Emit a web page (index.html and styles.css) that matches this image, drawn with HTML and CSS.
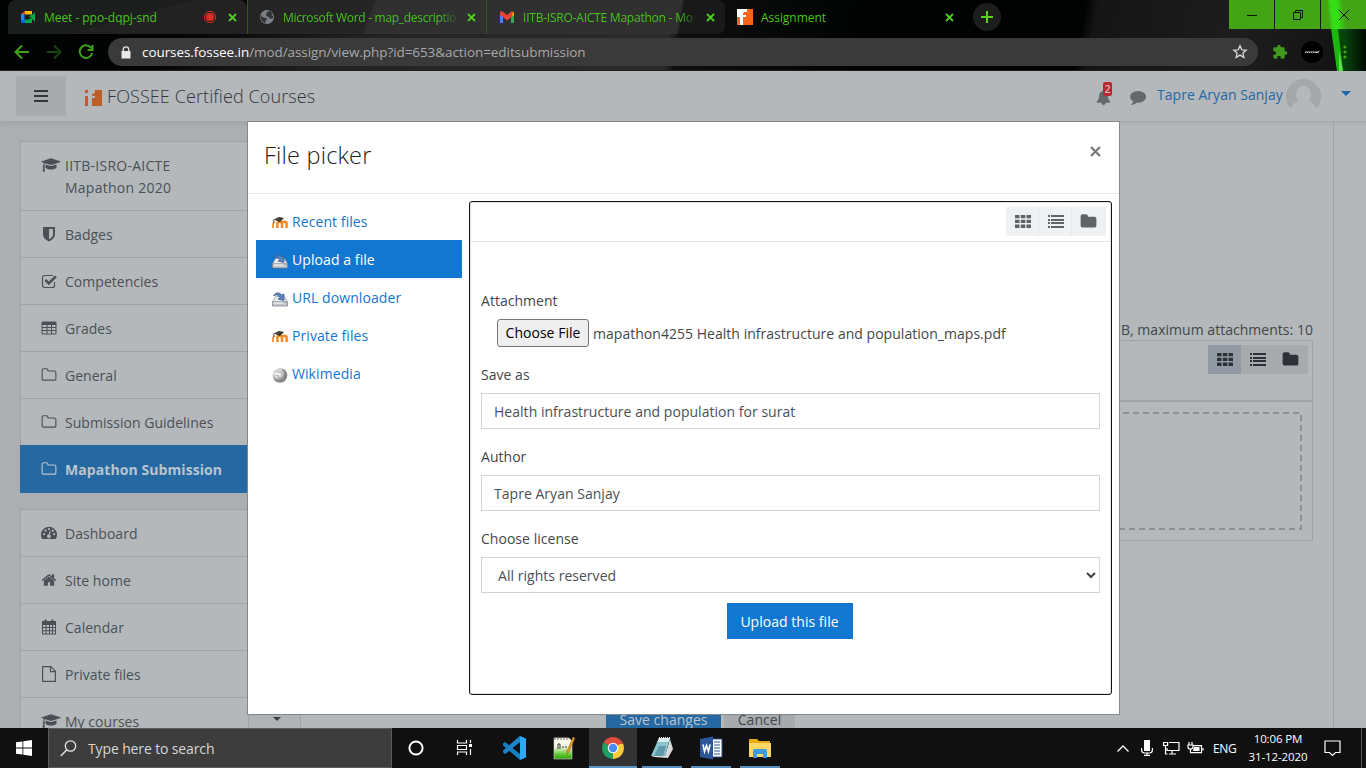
FILE: index.html
```html
<!DOCTYPE html>
<html lang="en">
<head>
<meta charset="utf-8">
<title>Assignment</title>
<link rel="stylesheet" href="styles.css">
</head>
<body>
<svg class="defs" width="0" height="0">
  <symbol id="cap" viewBox="0 0 2304 1792"><path d="M1774 836l18 316q4 69-82 128t-235 93.500-323 34.500-323-34.500-235-93.500-82-128l18-316 574 181q22 7 48 7t48-7zm530-324q0 23-22 31l-1120 352q-4 1-10 1t-10-1l-652-206q-43 34-71 111.500t-34 178.500q63 36 63 109 0 69-58 107l58 433q2 14-8 25-9 11-24 11h-192q-15 0-24-11-10-11-8-25l58-433q-58-38-58-107 0-73 65-111 11-207 98-330l-333-104q-22-8-22-31t22-31l1120-352q4-1 10-1t10 1l1120 352q22 8 22 31z"/></symbol>
  <symbol id="folder-o" viewBox="0 0 1792 1792"><path d="M1600 1312v-704q0-40-28-68t-68-28h-704q-40 0-68-28t-28-68v-64q0-40-28-68t-68-28h-320q-40 0-68 28t-28 68v960q0 40 28 68t68 28h1216q40 0 68-28t28-68zm128-704v704q0 92-66 158t-158 66h-1216q-92 0-158-66t-66-158v-960q0-92 66-158t158-66h320q92 0 158 66t66 158v32h672q92 0 158 66t66 158z"/></symbol>
  <symbol id="folder" viewBox="0 0 1792 1792"><path d="M1728 608v704q0 92-66 158t-158 66h-1216q-92 0-158-66t-66-158v-960q0-92 66-158t158-66h320q92 0 158 66t66 158v32h672q92 0 158 66t66 158z"/></symbol>
  <symbol id="home" viewBox="0 0 1792 1792"><path d="M1472 992v480q0 26-19 45t-45 19h-384v-384h-256v384h-384q-26 0-45-19t-19-45v-480q0-1 .5-3t.5-3l575-474 575 474q1 2 1 6zm223-69l-62 74q-8 9-21 11h-3q-13 0-21-7l-692-577-692 577q-12 8-24 7-13-2-21-11l-62-74q-8-10-7-23.500t11-21.500l719-599q32-26 76-26t76 26l244 204v-195q0-14 9-23t23-9h192q14 0 23 9t9 23v408l219 182q10 8 11 21.500t-7 23.500z"/></symbol>
  <symbol id="bell" viewBox="0 0 1792 1792"><path d="M1728 1408q0 52-38 90t-90 38h-448q0 106-75 181t-181 75-181-75-75-181h-448q-52 0-90-38t-38-90q50-42 91-88t85-119.500 74.500-158.500 50-206 19.500-260q0-152 117-282.500t307-158.500q-8-19-8-39 0-40 28-68t68-28 68 28 28 68q0 20-8 39 190 28 307 158.500t117 282.500q0 139 19.500 260t50 206 74.500 158.500 85 119.500 91 88z"/></symbol>
  <symbol id="comment" viewBox="0 0 1792 1792"><path d="M1792 896q0 174-120 321.500t-326 233-450 85.500q-70 0-145-8-198 175-460 242-49 14-114 22-17 2-30.500-9t-17.500-29q-3-14 6-25 60-65 97-107 60-66 117-261-157-89-247.500-220t-90.500-281q0-130 71-248.500t191-204.500 286-136.500 348-50.500q244 0 450 85.500t326 233 120 321.500z"/></symbol>
  <symbol id="shield" viewBox="0 0 16 16"><path fill-rule="evenodd" d="M2 1h12v7c0 3.500-2.500 5.800-6 7.500C4.500 13.800 2 11.500 2 8zM8 3v10.300c2.500-1.400 4-3 4-5.300V3z"/></symbol>
  <symbol id="check" viewBox="0 0 16 16"><path d="M13.500 9v3.500a2 2 0 0 1-2 2h-8a2 2 0 0 1-2-2v-8a2 2 0 0 1 2-2H12" fill="none" stroke="currentColor" stroke-width="1.200"/><path d="M3.500 7.800l1.700-1.700 2.600 2.500L14 2.500l1.800 1.800-8 8z"/></symbol>
  <symbol id="table" viewBox="0 0 16 16"><path fill-rule="evenodd" d="M1.500 1.500h13q1 0 1 1v11q0 1-1 1h-13q-1 0-1-1v-11q0-1 1-1zM1.500 5v2h4V5zm5 0v2h3.500V5zm4.500 0v2h3.500V5zM1.500 8v2h4V8zm5 0v2h3.500V8zM11 8v2h3.500V8zM1.500 11v2.500h4V11zm5 0v2.500h3.500V11zm4.500 0v2.500h3.500V11z"/></symbol>
  <symbol id="dash" viewBox="0 0 16 16"><path fill-rule="evenodd" d="M1.200 14A8 8 0 1 1 14.800 14zM2 9.200a1.100 1.100 0 1 0 2.200 0a1.100 1.100 0 1 0-2.200 0zM3.500 5.700a1.100 1.100 0 1 0 2.200 0a1.100 1.100 0 1 0-2.200 0zM6.900 4a1.100 1.100 0 1 0 2.200 0a1.100 1.100 0 1 0-2.200 0zM10.700 5.700a1.100 1.100 0 1 0 2.200 0a1.100 1.100 0 1 0-2.200 0zM12 9.200a1.100 1.100 0 1 0 2.200 0a1.100 1.100 0 1 0-2.200 0zM8.600 6l-.9 3.500a1.800 1.800 0 1 0 1.200.3L9.700 6.200z"/></symbol>
  <symbol id="cal" viewBox="0 0 16 16"><path fill-rule="evenodd" d="M1 2h2.500V.5h2V2h5V.5h2V2H15v13.500H1zM2 6v2h2.500V6zm3.500 0v2H8V6zM9 6v2h2V6zm3 0v2h2V6zM2 9v2.300h2.500V9zm3.500 0v2.300H8V9zM9 9v2.300h2V9zm3 0v2.300h2V9zM2 12.300v2.200h2.500v-2.200zm3.500 0v2.200H8v-2.200zm3.500 0v2.200h2v-2.200zm3 0v2.200h2v-2.200z"/></symbol>
  <symbol id="file" viewBox="0 0 16 16"><path d="M1.600.6h8.200l4.600 4.600v10.200H1.600zM9.500.6v5h5" fill="none" stroke="currentColor" stroke-width="1.200"/></symbol>
  <symbol id="th" viewBox="0 0 16 13"><path d="M0 0h4.500v3.300H0zM5.800 0h4.500v3.300H5.800zM11.500 0H16v3.300h-4.500zM0 4.800h4.500v3.300H0zM5.800 4.800h4.500v3.300H5.800zM11.500 4.800H16v3.300h-4.500zM0 9.600h4.500v3.300H0zM5.800 9.600h4.500v3.300H5.800zM11.500 9.600H16v3.300h-4.500z"/></symbol>
  <symbol id="list" viewBox="0 0 16 13"><path shape-rendering="crispEdges" d="M0 0h2v2H0zM3 0h13v2H3zM0 4h2v2H0zM3 4h13v2H3zM0 7h2v2H0zM3 7h13v2H3zM0 11h2v2H0zM3 11h13v2H3z"/></symbol>
  <symbol id="moodle" viewBox="0 0 16 16"><path d="M1 13V9.500Q1 7.500 3 6.500" fill="none" stroke="#f29233" stroke-width="1.800"/><path d="M5.400 13V8.700q0-2 2.300-2t2.300 2V13M10 8.700q0-2 2.300-2t2.300 2V13" fill="none" stroke="#f68a22" stroke-width="2.500"/><path d="M1.500 4.500L7 2l5 1-4 4z" fill="#38342f"/><path d="M7.500 4L1.500 5v3.500" stroke="#6a625a" stroke-width=".8" fill="none"/></symbol>
  <symbol id="drive" viewBox="0 0 16 16"><path d="M3.500 5.500h9L15.500 11H.5z" fill="#e8eaee" stroke="#8f959d" stroke-width=".7"/><path d="M.5 11h15v4H.5z" fill="#c6c9ce" stroke="#777c83" stroke-width=".7"/><path d="M1.500 12h10" stroke="#fff"/><path d="M1.500 4.500Q5-.5 10 4l2-1v6.500L6 8l2-1.500Q6 3 1.500 4.500z" fill="#5b84bd" stroke="#345a92" stroke-width=".7"/></symbol>
  <symbol id="puzzle" viewBox="0 0 24 24"><path d="M20.500 11H19V7a2 2 0 0 0-2-2h-4V3.500a2.500 2.500 0 0 0-5 0V5H4a2 2 0 0 0-2 2v3.800h1.500a2.700 2.700 0 0 1 0 5.400H2V20a2 2 0 0 0 2 2h3.800v-1.500a2.700 2.700 0 0 1 5.400 0V22H17a2 2 0 0 0 2-2v-4h1.500a2.500 2.500 0 0 0 0-5z"/></symbol>
</svg>

<div class="screen">
  <div class="browser">
    <svg class="streak" width="60" height="71" viewBox="0 0 60 71"><defs><linearGradient id="g"><stop offset="0" stop-color="#0b3d0b" stop-opacity="0"/><stop offset=".3" stop-color="#084d08"/><stop offset=".5" stop-color="#05400c"/><stop offset="1" stop-color="#020a02"/></linearGradient></defs><path d="M20 0h40v71H32z" fill="url(#g)"/><path d="M21 0h7q5 35 9 71h-6Q26 35 21 0z" fill="#1cb80f"/><path d="M33 50l4 21h-4z" fill="#5ce04e"/></svg>
    <div class="tabs">
      <div class="tab t1">
        <svg width="16" height="16" viewBox="0 0 16 16"><path d="M1 5l4-3v3z" fill="#ea4335"/><path d="M5 2h7v3.500H5z" fill="#fbbc04"/><path d="M1 5h3.500v6H1z" fill="#2684fc"/><path d="M1 11h4v3H2q-1 0-1-1z" fill="#0066da"/><path d="M5 10.500h4L12 8v6H5z" fill="#00ac47"/><path d="M9 8l3-3.500V8zM12 6l3-2.500v9L12 10z" fill="#00ac47"/></svg>
        <span class="tt tt1">Meet - ppo-dqpj-snd</span>
        <svg class="rec" width="14" height="14" viewBox="0 0 14 14"><circle cx="7" cy="7" r="5.600" fill="none" stroke="#d93025" stroke-width="1"/><circle cx="7" cy="7" r="4" fill="#d93025"/></svg>
        <svg class="x" width="9" height="9" viewBox="0 0 9 9"><path d="M1 1l7 7M8 1L1 8"/></svg>
      </div>
      <div class="tab t2">
        <svg width="16" height="16" viewBox="0 0 16 16"><circle cx="8" cy="8" r="7" fill="#7b8086"/><path d="M2 6q1 3 5 3l1 1.500-1.500 1L7 14q-5-1-5.500-6zM8 3l3-1 3 3-2 1 2 1v2l-3 1-1-2-3-1z" fill="#303235"/></svg>
        <span class="tt tt2">Microsoft Word - map_descriptio</span>
        <svg class="x" width="9" height="9" viewBox="0 0 9 9"><path d="M1 1l7 7M8 1L1 8"/></svg>
      </div>
      <div class="tab t3">
        <svg width="16" height="16" viewBox="0 0 16 16"><path d="M1 5v9h3V7z" fill="#4285f4"/><path d="M12 7v7h2q1 0 1-1V5z" fill="#34a853"/><path d="M12 4l3-1v3l-3 2z" fill="#fbbc04"/><path d="M1 3l2-1 5 4 5-4 1 1-1 5-5 3.500L2.500 7 1 6z" fill="#ea4335"/></svg>
        <span class="tt tt3">IITB-ISRO-AICTE Mapathon - Mo</span>
        <svg class="x" width="9" height="9" viewBox="0 0 9 9"><path d="M1 1l7 7M8 1L1 8"/></svg>
      </div>
      <div class="tab t4">
        <svg width="16" height="16" viewBox="0 0 16 16"><path d="M0 0h16v16H0z" fill="#f8641b"/><path d="M0 0h10v3Q6 2 6 6h3v2H6v8H3V8H0z" fill="#fff"/></svg>
        <span class="tt tt4">Assignment</span>
        <svg class="x" width="9" height="9" viewBox="0 0 9 9"><path d="M1 1l7 7M8 1L1 8"/></svg>
      </div>
      <div class="newtab"><svg width="12" height="12" viewBox="0 0 12 12"><path d="M6 0v12M0 6h12"/></svg></div>
      <div class="win">
        <div><svg width="12" height="12" viewBox="0 0 12 12"><path d="M1 6.500h10"/></svg></div>
        <div><svg width="12" height="12" viewBox="0 0 12 12"><path d="M1.500 3.500h7v7h-7zM3.500 3.500v-2h7v7h-2"/></svg></div>
        <div class="wx"><svg width="12" height="12" viewBox="0 0 12 12"><path d="M1 1l10 10M11 1L1 11"/></svg></div>
      </div>
    </div>
    <div class="bar">
      <svg class="nav" width="16" height="16" viewBox="0 0 16 16"><path d="M15 8H2M8 1.500L1.500 8 8 14.500"/></svg>
      <svg class="nav dim" width="16" height="16" viewBox="0 0 16 16"><path d="M1 8h13M8 1.500L14.500 8 8 14.500"/></svg>
      <svg class="nav" width="16" height="16" viewBox="0 0 16 16"><path d="M13.500 4.500A6.300 6.300 0 1 0 14.200 9M14.500 1v5h-5"/></svg>
      <div class="url">
        <svg width="10" height="13" viewBox="0 0 10 13"><path d="M.5 5h9v7.500h-9z" fill="#e8e8e8"/><path d="M2.300 5V3.500a2.700 2.700 0 0 1 5.400 0V5" fill="none" stroke="#e8e8e8" stroke-width="1.300"/></svg>
        <span class="addr"><b>courses.fossee.in</b>/mod/assign/view.php?id=653&amp;action=editsubmission</span>
        <svg class="star" width="16" height="16" viewBox="0 0 16 16"><path d="M8 1.800l1.800 4 4.400.4-3.300 2.900 1 4.300L8 11.100l-3.900 2.300 1-4.300L1.800 6.200l4.400-.4z" fill="none" stroke="#d8d8d8" stroke-width="1.300"/></svg>
      </div>
      <svg class="puz" width="16" height="16"><use href="#puzzle"/></svg>
      <svg class="ava" width="22" height="22" viewBox="0 0 22 22"><circle cx="11" cy="11" r="11" fill="#000"/><path d="M4 10.500h12l3-1-2 2.500H4z" fill="#bdbdbd"/><path d="M5 11.500h10" stroke="#555" stroke-dasharray="1 1"/></svg>
      <svg class="dots" width="4" height="14" viewBox="0 0 4 14"><circle cx="2" cy="2" r="1.600"/><circle cx="2" cy="7" r="1.600"/><circle cx="2" cy="12" r="1.600"/></svg>
    </div>
  </div>

  <div class="page">
    <header class="head">
      <div class="burger"><i></i><i></i><i></i></div>
      <svg class="logo" width="17" height="17" viewBox="0 0 17 17"><path d="M0 0h17v17H0z" fill="#b4b8bb"/><path d="M0 1h3v3H0zM0 7h3v10H0zM9 1h8v16H7V9h3V7H7q0-3 3-3V2z" fill="#bd5e2a"/></svg>
      <span class="brand">FOSSEE Certified Courses</span>
      <div class="bell"><svg width="15" height="15"><use href="#bell"/></svg><em>2</em></div>
      <svg class="comm" width="16" height="16"><use href="#comment"/></svg>
      <span class="user">Tapre Aryan Sanjay</span>
      <svg class="pic" width="35" height="35" viewBox="0 0 35 35"><circle cx="17.500" cy="17.500" r="17.500" fill="#a4a8aa"/><path d="M17.500 7a7.500 8.500 0 0 1 4.800 15q6 2 9 9l-4 4H7.700l-4-4q3-7 9-9a7.500 8.500 0 0 1 4.800-15z" fill="#b4b8bb"/></svg>
      <i class="caret"></i>
    </header>
    <div class="content">
      <aside class="side">
        <nav class="menu">
          <a class="two"><svg class="capi" width="20" height="16"><use href="#cap"/></svg><span>IITB-ISRO-AICTE<br>Mapathon 2020</span></a>
          <a><svg width="16" height="16"><use href="#shield"/></svg><span>Badges</span></a>
          <a><svg width="16" height="16"><use href="#check"/></svg><span>Competencies</span></a>
          <a><svg width="16" height="16"><use href="#table"/></svg><span>Grades</span></a>
          <a><svg width="16" height="16"><use href="#folder-o"/></svg><span>General</span></a>
          <a><svg width="16" height="16"><use href="#folder-o"/></svg><span>Submission Guidelines</span></a>
          <a class="on"><svg width="16" height="16"><use href="#folder-o"/></svg><span>Mapathon Submission</span></a>
        </nav>
        <nav class="menu">
          <a><svg width="16" height="16"><use href="#dash"/></svg><span>Dashboard</span></a>
          <a><svg width="16" height="16"><use href="#home"/></svg><span>Site home</span></a>
          <a><svg width="16" height="16"><use href="#cal"/></svg><span>Calendar</span></a>
          <a><svg width="16" height="16"><use href="#file"/></svg><span>Private files</span></a>
          <a><svg class="capi" width="20" height="16"><use href="#cap"/></svg><span>My courses</span></a>
        </nav>
      </aside>
      <div class="scroll"><i class="caret dark"></i></div>
      <main class="main">
        <div class="max">Maximum file size: 10MB, maximum attachments: 10</div>
        <div class="fm">
          <div class="fmbar"><div class="btns dimmed"><span class="sel"><svg width="16" height="13"><use href="#th"/></svg></span><span><svg width="16" height="13"><use href="#list"/></svg></span><span><svg width="17" height="17"><use href="#folder"/></svg></span></div></div>
          <div class="drop"><svg width="970" height="118"><rect x="1" y="1" width="968" height="116" fill="none" stroke="#8d9194" stroke-width="2" stroke-dasharray="6 4"/></svg></div>
        </div>
        <div class="actions"><span class="save">Save changes</span><span class="cancel">Cancel</span></div>
      </main>
    </div>

    <div class="modal">
      <div class="mhead"><h3>File picker</h3><svg width="11" height="11" viewBox="0 0 11 11"><path d="M1 1l9 9M10 1l-9 9" stroke="#7c7c7c" stroke-width="2.400"/></svg></div>
      <div class="mbody">
        <div class="repos">
          <a><svg width="16" height="16"><use href="#moodle"/></svg><span>Recent files</span></a>
          <a class="on"><svg width="16" height="16"><use href="#drive"/></svg><span>Upload a file</span></a>
          <a><svg width="16" height="16"><use href="#drive"/></svg><span>URL downloader</span></a>
          <a><svg width="16" height="16"><use href="#moodle"/></svg><span>Private files</span></a>
          <a><svg width="16" height="16" viewBox="0 0 16 16"><defs><radialGradient id="w" cx=".35" cy=".35"><stop offset="0" stop-color="#fff"/><stop offset=".6" stop-color="#d8d8d8"/><stop offset="1" stop-color="#858585"/></radialGradient></defs><circle cx="8" cy="8.500" r="7.300" fill="url(#w)"/><path d="M2 5l3-1 1 2 3-1 1 3 4-1M3 9l3-1 1 3 4-1 1 3M6 1l1 4M10 5l2-3M5 12l2-1 1 4" fill="none" stroke="#999" stroke-width=".6"/><path d="M4 0h3L6 2.500 4 2z" fill="#fff"/></svg><span>Wikimedia</span></a>
        </div>
        <div class="panel">
          <div class="pbar"><div class="btns"><span><svg width="16" height="13"><use href="#th"/></svg></span><span><svg width="16" height="13"><use href="#list"/></svg></span><span><svg width="17" height="17"><use href="#folder"/></svg></span></div></div>
          <div class="form">
            <label class="la">Attachment</label>
            <div class="file"><span class="choose">Choose File</span><span class="fname">mapathon4255 Health infrastructure and population_maps.pdf</span></div>
            <label class="ls">Save as</label>
            <div class="input"><span class="v1">Health infrastructure and population for surat</span></div>
            <label class="lu">Author</label>
            <div class="input"><span class="v2">Tapre Aryan Sanjay</span></div>
            <label class="ll">Choose license</label>
            <div class="input select"><span class="v3">All rights reserved</span><svg width="10" height="7" viewBox="0 0 10 7"><path d="M1 1l4 4 4-4" fill="none" stroke="#3c4248" stroke-width="2"/></svg></div>
            <div class="upload"><span>Upload this file</span></div>
          </div>
        </div>
      </div>
    </div>
  </div>

  <div class="taskbar">
    <div class="start"><svg width="16" height="16" viewBox="0 0 16 16"><path d="M0 2.300l6.500-.9v6.200H0zM7.300 1.300L16 0v7.600H7.300zM0 8.400h6.500v6.200L0 13.700zM7.300 8.400H16V16l-8.700-1.200z"/></svg></div>
    <div class="search"><svg width="17" height="17" viewBox="0 0 17 17"><circle cx="10.500" cy="6" r="5.200" fill="none" stroke="#e6e6e6" stroke-width="1.300"/><path d="M6.800 9.800L.8 16" stroke="#e6e6e6" stroke-width="1.400"/></svg><span>Type here to search</span></div>
    <div class="apps">
      <div class="app"><svg width="18" height="18" viewBox="0 0 18 18"><circle cx="9" cy="9" r="6.600" fill="none" stroke="#fff" stroke-width="2"/></svg></div>
      <div class="app"><svg class="tv" width="18" height="18" viewBox="0 0 18 18"><path d="M2.500 1v3h9V1M2.500 16v-3h9v3M2.500 6.500h9v4h-9zM15.500 1v3M15.500 10v6" fill="none" stroke="#fff" stroke-width="1.200"/><path d="M14 5h3v3h-3z" fill="#fff"/></svg></div>
      <div class="app"><svg width="24" height="24" viewBox="0 0 24 24"><path d="M1 7.500L3 6l15 12v6L1 9.500z" fill="#1780c4"/><path d="M1 16.500L3 18 18 6V0L1 14.500z" fill="#0f6cae"/><path d="M18 0l6 2.500v19L18 24z" fill="#2fa9f2"/><path d="M3 18L18 6V0L1 15z" fill="#1b84cc"/></svg></div>
      <div class="app"><svg width="24" height="24" viewBox="0 0 24 24"><defs><linearGradient id="n" x2="0" y2="1"><stop offset=".4" stop-color="#f6fbe9"/><stop offset=".8" stop-color="#5cc42a"/><stop offset="1" stop-color="#2fa010"/></linearGradient></defs><path d="M2 2h15l3 3v18H2z" fill="url(#n)" stroke="#cfd6c8" stroke-width=".6"/><path d="M3 1v3M6 1v3M9 1v3M12 1v3M15 1v3" stroke="#777"/><path d="M6 13V8h2v5M10 11h2M13 11h2" stroke="#333" fill="none"/><path d="M21 1l2 1-6 14-2 2 0-3z" fill="#e39b2d" stroke="#8a5a1a" stroke-width=".5"/></svg></div>
      <div class="app chrome"><svg width="24" height="24" viewBox="0 0 24 24"><path d="M12 12L2.500 6.500A11 11 0 0 1 21.500 6.500z" fill="#dc4c3f"/><path d="M12 12L21.500 6.500A11 11 0 0 1 12 23z" fill="#fbcb3c"/><path d="M12 12v11A11 11 0 0 1 2.500 6.500z" fill="#1fa05d"/><path d="M11 6.700h10.600L22 8H12z" fill="#dc4c3f"/><circle cx="12" cy="12" r="5.300" fill="#fff"/><circle cx="12" cy="12" r="4.200" fill="#4a8af4"/></svg></div>
      <div class="app u half"><svg width="24" height="24" viewBox="0 0 24 24"><path d="M9 2h11l-5 18H1z" fill="#8cc4cd"/><path d="M9 2h11l-1.200 4H7.200z" fill="#d9eef0"/><path d="M9 10l7 0-3 10H4z" fill="#3f7f90" opacity=".6"/><path d="M20 3l3 10-5 9-14-1-2-1h13z" fill="#d9dadb"/><path d="M9 2h11" stroke="#eee" stroke-dasharray="1 1" stroke-width="2"/></svg></div>
      <div class="app u"><svg width="24" height="24" viewBox="0 0 24 24"><path d="M12 3h11v18H12z" fill="#fff" stroke="#2b579a"/><path d="M15 6h6M15 9h6M15 12h6M15 15h6M15 18h6" stroke="#2b579a"/><path d="M1 3l13-2.500v23L1 21z" fill="#2b579a"/><path d="M4 8.500l1.500 7 2-6 2 6 1.500-7" fill="none" stroke="#fff" stroke-width="1.600"/></svg></div>
      <div class="app u"><svg width="24" height="24" viewBox="0 0 24 24"><path d="M1 3h8l2 2h11v16H1z" fill="#e8a917"/><path d="M1 7h22v14H1z" fill="#fdd766"/><path d="M5 22v-7q0-2 2-2h10q2 0 2 2v7h-4v-4H9v4z" fill="#3d9be0"/></svg></div>
    </div>
    <div class="tray">
      <svg width="12" height="7" viewBox="0 0 12 7"><path d="M.5 6.500L6 1l5.500 5.500" fill="none" stroke="#fff" stroke-width="1.300"/></svg>
      <svg class="mic" width="12" height="16" viewBox="0 0 12 16"><path d="M3 0h6v11H3z" fill="#fff"/><path d="M.6 8v2q0 3 3 3h4.800q3 0 3-3V8M6 13v2.500M3 15.400h6" fill="none" stroke="#fff" stroke-width="1.200"/></svg>
      <svg class="net" width="17" height="14" viewBox="0 0 17 14"><path d="M6 1.500h10v8H4V7M9 9.500v3M6 13h7M.6 1.500h4v3h-4zM2.500 5v8h2" fill="none" stroke="#fff" stroke-width="1.200"/></svg>
      <svg class="bat" width="17" height="13" viewBox="0 0 17 13"><path d="M6 3.600h8.500v7H3.500V9M16 6v2.500M2 0v3M5 0v3M1 3h5v2q0 2-2.500 2T1 5zM3.500 7v3" fill="none" stroke="#fff" stroke-width="1.200"/><path d="M7 5h5.500v4H6z" fill="#fff"/></svg>
      <span class="eng">ENG</span>
      <span class="clock"><span class="c1">10:06 PM</span><span class="c2">31-12-2020</span></span>
      <svg class="note" width="18" height="17" viewBox="0 0 18 17"><path d="M1 1h15v11.500h-4.500l-3 3-3-3H1z" fill="none" stroke="#fff" stroke-width="1.200"/></svg>
    </div>
  </div>
</div>
</body>
</html>
```
FILE: styles.css
```css
* { box-sizing: border-box; }
body { margin: 0; font-family: "Open Sans", "Noto Sans", sans-serif; font-size: 14px; letter-spacing: 0.03px; color: #44474a; }
.defs { position: absolute; }
.screen { width: 1366px; height: 768px; overflow: hidden; display: flex; flex-direction: column; }
svg { flex: none; fill: currentColor; }
span { white-space: nowrap; }

/* browser window */
.browser { height: 71px; flex: none; position: relative; border-bottom: 1px solid #241c22;
  background: linear-gradient(172deg, #020303 0 15%, transparent 35%), linear-gradient(100deg, #020303 0 160px, #111 220px, #232323 340px, #2a2a2a 665px, #0e0e0e 676px, #080909 755px, #010202 860px 1070px, #151515 1082px, #1d1d1d 1230px, #101010); }
.streak { position: absolute; right: 0; top: 0; }
.tabs { display: flex; height: 34px; padding-left: 8px; position: relative; }
.tab { width: 239px; height: 34px; display: flex; align-items: center; padding: 0 9px 0 12px; flex: none; }
.t1 { background: linear-gradient(165deg, #1c1d1d 50%, #222 52%); border-radius: 8px 8px 0 0; }
.t2, .t3 { background: linear-gradient(110deg, #252525 50%, #303030 52%); border-left: 1px solid #285c18; }
.t2 { padding-left: 11px; }
.t3 { background: linear-gradient(100deg, #303030 80%, #191919 81%); border-radius: 0 8px 8px 0; }
.t4 { padding-left: 12px; }
.tt { margin-left: 8px; font-size: 12px; color: #45c41b; letter-spacing: -0.05px; }
.t2 .tt, .t3 .tt { width: 177px; -webkit-mask-image: linear-gradient(90deg, #000 88%, transparent); mask-image: linear-gradient(90deg, #000 88%, transparent); }
.tt2 { letter-spacing: -0.3px; }
.tt3 { letter-spacing: -0.22px; }
.tab .x { margin-left: auto; stroke: #4bd01d; stroke-width: 1.8; margin-right: 1px; }
.rec { margin-left: auto; }
.rec + .x { margin-left: 11px !important; }
.newtab { width: 28px; height: 28px; border-radius: 50%; background: #1c1e1d; margin: 3px 0 0 9px; display: grid; place-items: center; }
.newtab svg { stroke: #55d51d; stroke-width: 2; }
.win { margin-left: auto; display: flex; gap: 1px; height: 29px; }
.win div { width: 45px; background: #43a516; display: grid; place-items: center; }
.win .wx { background: linear-gradient(84deg, #43a516 18%, #35de15 26% 38%, #43a516 52%); }
.win svg { fill: none; stroke: #0c1608; stroke-width: 1; }
.bar { display: flex; align-items: center; height: 36px; padding-left: 14px; position: relative; }
.nav { fill: none; stroke: #3fa01c; stroke-width: 2; margin-right: 16px; }
.dim { opacity: .4; }
.url { width: 1150px; height: 28px; margin-left: -2px; border-radius: 14px; background: #3a3a3a; display: flex; align-items: center; padding: 0 10px 0 13px; }
.addr { margin-left: 11px; font-size: 13.500px; letter-spacing: -.07px; color: #a9a9a9; }
.addr b { font-weight: 400; color: #fff; }
.star { margin-left: auto; }
.puz { margin-left: 14px; color: #3f9a1d; }
.ava { margin-left: 13px; }
.dots { margin-left: 20px; color: #3f9a1d; }

/* page header */
.page { height: 657px; flex: none; position: relative; overflow: hidden; background: #b4b8bb; }
.head { height: 51px; display: flex; align-items: center; border-bottom: 1px solid #a5a9ac; padding: 0 15px 0 16px; box-shadow: 0 2px 4px rgba(0,0,0,.06); position: relative; }
.burger { width: 50px; height: 40px; background: #a7abae; display: flex; flex-direction: column; gap: 3px; align-items: center; justify-content: center; }
.burger i { width: 14px; height: 2px; background: #33373a; }
.logo { margin: 2px 0 0 19px; }
.brand { font-size: 18px; margin-left: 5px; color: #31363a; letter-spacing: .1px; font-weight: 300; }
.bell { margin-left: auto; color: #66696c; position: relative; display: flex; padding-top: 2px; }
.bell em { position: absolute; left: 7px; top: -6px; width: 9px; height: 14px; border-radius: 2px; background: #bb2730; color: #d0c0c2; font: 600 10px/14px "Open Sans", sans-serif; text-align: center; }
.comm { margin-left: 19px; margin-top: 2px; color: #66696c; }
.user { margin: -3px 0 0 11px; color: #2369a5; width: 125px; }
.pic { margin-left: 4px; }
.caret { border: 5px solid transparent; border-top-color: #1f68a8; border-bottom: 0; margin: -5px 0 0 20px; }

/* course page */
.content { display: flex; height: 606px; }
.side { width: 248px; padding: 19px 0 0 20px; background: #abafb2; flex: none; }
.menu { display: flex; flex-direction: column; border: 1px solid #a0a4a7; border-width: 1px 0 0 1px; margin-bottom: 16px; }
.menu a { height: 47px; display: flex; align-items: center; padding-left: 20px; border-bottom: 1px solid #a0a4a7; background: #b4b8bb; color: #4a5056; }
.menu span { margin-left: 8px; }
.menu .capi { margin-right: -4px; }
.menu .two { height: 69px; align-items: flex-start; padding-top: 13px; line-height: 22px; letter-spacing: .25px; }
.menu .two .capi { margin-top: 2px; }
.menu a.on { background: #2668a2; color: #bac4cd; font-weight: 700; margin: -1px 0 0 -1px; height: 48px; padding-left: 21px; border: 0; letter-spacing: .08px; }
.scroll { width: 52px; padding-top: 595px; background: #afb3b6; border-left: 1px solid #a0a4a7; flex: none; }
.caret.dark { display: block; margin: 0 0 0 24px; width: 0; border-width: 4px; border-bottom: 0; border-top-color: #3c4043; }
.main { width: 1034px; border: solid #a0a4a7; border-width: 0 1px; padding: 198px 20px 0; display: flex; flex-direction: column; flex: none; }
.max { text-align: right; height: 20px; line-height: 20px; }
.fm { height: 201px; border: 1px solid #a0a4a7; }
.fmbar { height: 61px; border-bottom: 2px solid #a0a4a7; padding: 4px 4px 0 0; display: flex; justify-content: flex-end; }
.drop { padding: 10px; display: flex; }
.actions { display: flex; margin: 161px 0 0 285px; gap: 3px; }
.actions span { height: 36px; line-height: 36px; flex: none; margin-top: 0; text-align: center; }
.save { width: 115px; background: #2668a2; color: #bac4cd; }
.cancel { width: 71px; background: #a7abae; }
.btns { display: flex; color: #606468; height: 29px; }
.btns span { width: 33px; background: #eff1f3; display: grid; place-items: center; box-shadow: inset -1px 0 #e6e8ea; padding-left: 1px; }
.btns span:last-child { width: 34px; box-shadow: none; padding: 0 1px 0 0; }
.btns.dimmed { color: #2c3138; }
.dimmed span { background: #a7abae; box-shadow: none; }
.dimmed .sel { background: #929ba3; }

/* file picker dialog */
.modal { position: absolute; left: 247px; top: 50px; width: 873px; height: 594px; border: 1px solid #85878a; background: #fff; display: flex; flex-direction: column; }
.mhead { height: 72px; border-bottom: 1px solid #e6e8ea; display: flex; justify-content: space-between; padding: 16px 18px 0 16px; }
.mhead h3 { margin: 0; font-weight: 300; font-size: 23.500px; line-height: 34px; letter-spacing: .2px; color: #222; }
.mhead svg { margin-top: 8px; }
.mbody { display: flex; padding: 7px; padding-left: 8px; }
.repos { width: 206px; padding-top: 1px; display: flex; flex-direction: column; margin-right: 7px; letter-spacing: .08px; }
.repos a { height: 38px; display: flex; align-items: center; padding-left: 16px; color: #1177d1; }
.repos svg { margin-top: 4px; }
.repos span { margin-left: 4px; }
.repos .on { background: #1177d1; color: #fff; font-weight: 500; }
.panel { width: 643px; height: 494px; border: 1px solid #151515; border-radius: 3px; box-shadow: inset 0 0 0 1px #dfe1e3; padding: 1px; flex: none; }
.pbar { height: 39px; border-bottom: 1px solid #dfe1e3; display: flex; justify-content: flex-end; padding: 4px 4px 0 0; }
.form { padding: 49px 10px 0; display: flex; flex-direction: column; }
.form label { height: 22px; line-height: 20px; }
.file { display: flex; align-items: center; height: 28px; margin: 6px 0 18px 16px; }
.choose { width: 92px; height: 28px; line-height: 26px; background: #efefef; border: 1px solid #767676; border-radius: 3px; text-align: center; color: #000; }
.fname { margin-left: 4px; }
.input { height: 36px; border: 1px solid #ced4da; padding: 0 12px; display: flex; align-items: center; color: #495057; margin: 6px 0 18px; }
.select { padding: 0 3px 0 16px; justify-content: space-between; margin-bottom: 10px; }
.upload { align-self: center; width: 126px; height: 36px; margin-right: 2px; background: #1177d1; color: #fff; font-weight: 500; display: grid; place-items: center; }

/* taskbar */
.taskbar { height: 40px; flex: none; background: #101010; color: #fff; display: flex; align-items: center; }
.start { width: 48px; display: grid; place-items: center; }
.search { width: 344px; height: 40px; background: #3d3d3d; border: 1px solid #5c5c5c; display: flex; align-items: center; padding-left: 11px; color: #d6d6d6; letter-spacing: -.13px; }
.search span { margin-left: 11px; }
.apps { display: flex; height: 40px; }
.app { width: 48px; margin-right: 1.200px; display: grid; place-items: center; position: relative; }
.tv { margin-right: 3px; }
.chrome { background: #333; box-shadow: inset 0 -2px #5a93c4; }
.u { background: linear-gradient(#5a8fbd, #5a8fbd) center bottom / 40px 2px no-repeat; }
.tray { margin-left: auto; display: flex; align-items: center; height: 40px; border-right: 1px solid #555; width: 245px; margin-right: 4px; }
.mic { margin-left: 12px; }
.net { margin-left: 10px; }
.bat { margin-left: 7px; }
.eng { margin-left: 9px; width: 24px; font-size: 12px; letter-spacing: -.4px; }
.clock { display: flex; flex-direction: column; align-items: center; font-size: 11.500px; line-height: 18px; width: 60px; margin-left: 11px; letter-spacing: -.12px; }
.note { margin-left: 16px; }
```
